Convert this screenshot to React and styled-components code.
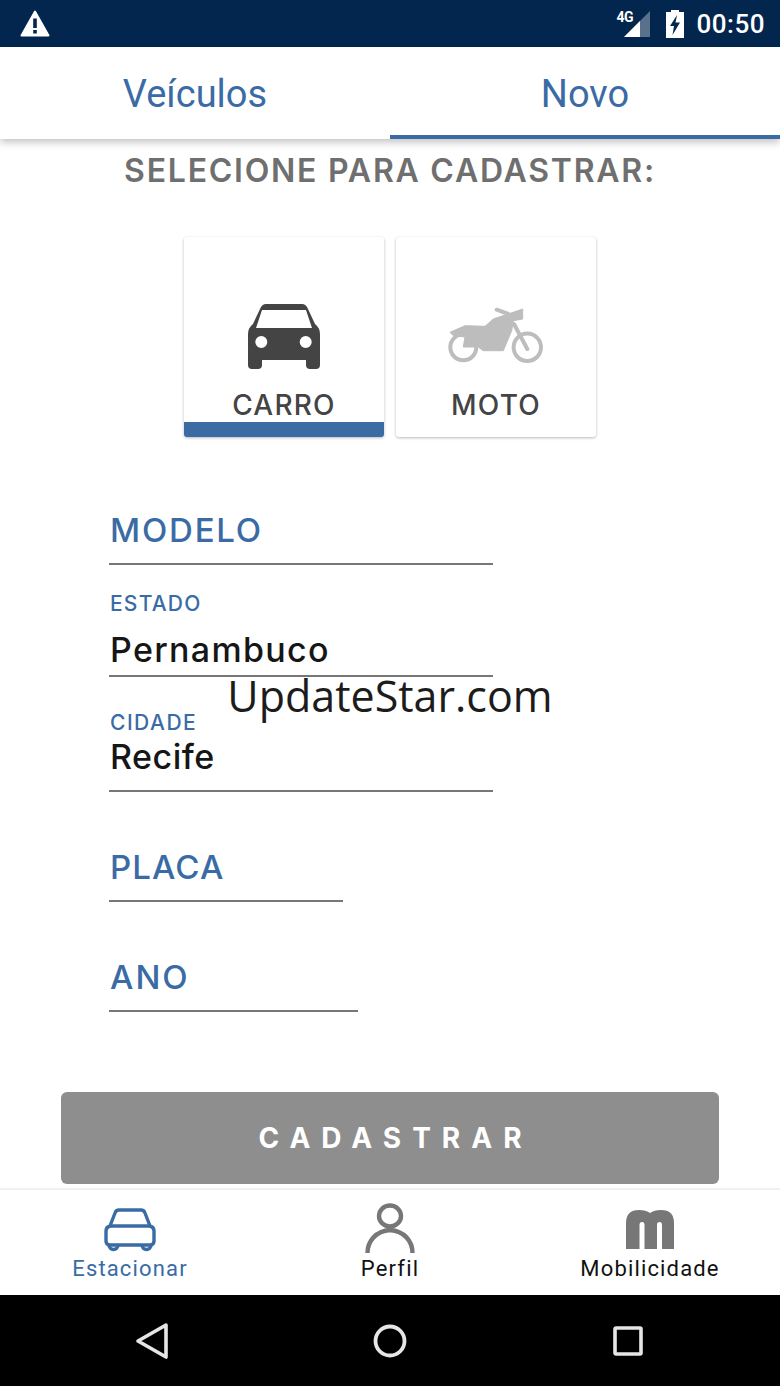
import React from 'react';
import styled, { createGlobalStyle } from 'styled-components';

const BLUE = '#3a6ba5';
const HEAD = '"Inter", "Liberation Sans", sans-serif';
const UI = 'Roboto, "Liberation Sans", sans-serif';

const Global = createGlobalStyle`
  html, body { margin: 0; padding: 0; background: #fff; }
  * { box-sizing: border-box; }
`;

const Screen = styled.div`
  position: relative;
  width: 780px;
  height: 1386px;
  display: flex;
  flex-direction: column;
  overflow: hidden;
  background: #fff;
  font-family: ${HEAD};
`;

const StatusBar = styled.div`
  height: 47px;
  flex: none;
  display: flex;
  align-items: center;
  padding: 0 15px 0 20px;
  background: #02264d;
  color: #fff;
`;

const StatusRight = styled.div`
  margin-left: auto;
  display: flex;
  align-items: center;
`;

const SignalWrap = styled.div`
  position: relative;
  width: 34px;
  height: 26px;
  margin-right: 15px;
`;

const NetLabel = styled.span`
  position: absolute;
  left: 1px;
  top: -1px;
  font: 700 14px/14px ${UI};
  letter-spacing: -0.5px;
  color: #fff;
`;

const Clock = styled.span`
  margin-left: 12px;
  font: 500 26px/30px ${UI};
  letter-spacing: 0.5px;
`;

const Tabs = styled.div`
  position: relative;
  z-index: 1;
  height: 92px;
  flex: none;
  display: flex;
  background: #fff;
  box-shadow: 0 3px 8px rgba(0, 0, 0, 0.25);
`;

const Tab = styled.div`
  flex: 1;
  display: flex;
  align-items: center;
  justify-content: center;
  padding-top: 6px;
  font: 400 38px/40px ${UI};
  color: ${BLUE};
  border-bottom: 4px solid ${p => (p.$active ? BLUE : 'transparent')};
`;

const Content = styled.div`
  flex: 1;
  display: flex;
  flex-direction: column;
`;

const Title = styled.h1`
  margin: 13px 0 0;
  text-align: center;
  font: 600 32px/38px ${HEAD};
  letter-spacing: 1.75px;
  color: #6f6f6f;
`;

const Cards = styled.div`
  margin-top: 47px;
  display: flex;
  justify-content: center;
  gap: 12px;
`;

const Card = styled.div`
  width: 200px;
  height: 200px;
  display: flex;
  flex-direction: column;
  align-items: center;
  background: #fff;
  border-radius: 3px;
  overflow: hidden;
  box-shadow: 0 1px 3px rgba(0, 0, 0, 0.28);
  border-bottom: 15px solid ${p => (p.$selected ? BLUE : '#fff')};
`;

const IconSlot = styled.div`
  height: 151px;
  flex: none;
  padding-top: 67px;
  display: flex;
  justify-content: center;
`;

const CardLabel = styled.span`
  font: 500 28px/34px ${HEAD};
  letter-spacing: 1.2px;
  color: #444;
`;

const Form = styled.div`
  margin-top: 73px;
  padding-left: 109px;
  display: flex;
  flex-direction: column;
`;

const Field = styled.div`
  width: ${p => p.$width}px;
  height: ${p => p.$height}px;
  display: flex;
  flex-direction: column;
  justify-content: flex-end;
  border-bottom: 2px solid #777;
`;

const Placeholder = styled.div`
  padding: 0 0 14px 1px;
  font: 500 33px/38px ${HEAD};
  letter-spacing: ${p => p.$spacing}px;
  color: ${BLUE};
`;

const SmallLabel = styled.div`
  padding-left: 1px;
  font: 500 21px/26px ${HEAD};
  letter-spacing: ${p => p.$spacing}px;
  color: ${BLUE};
`;

const Value = styled.div`
  margin-top: ${p => p.$top}px;
  padding: 0 0 ${p => p.$bottom}px 1px;
  font: 500 34px/38px ${HEAD};
  letter-spacing: ${p => p.$spacing}px;
  color: #161616;
`;

const SubmitButton = styled.button`
  margin: 80px 61px 0;
  height: 92px;
  flex: none;
  padding: 0 0 0 11px;
  border: 0;
  border-radius: 6px;
  background: #8e8e8e;
  color: #fff;
  font: 700 28px/32px ${HEAD};
  letter-spacing: 11px;
`;

const BottomNav = styled.div`
  height: 107px;
  flex: none;
  display: grid;
  grid-template-columns: repeat(3, 1fr);
  border-top: 2px solid #f0f0f0;
  background: #fff;
`;

const NavItem = styled.div`
  display: flex;
  flex-direction: column;
  align-items: center;
  justify-content: flex-end;
  padding-bottom: 13px;
  gap: 2px;
  color: ${p => (p.$active ? BLUE : '#111')};
`;

const NavIcon = styled.div`
  height: 52px;
  padding-top: ${p => p.$drop || 0}px;
  display: flex;
  align-items: center;
  justify-content: center;
`;

const NavLabel = styled.span`
  font: 400 22px/26px ${UI};
  letter-spacing: 1.15px;
`;

const SystemBar = styled.div`
  height: 91px;
  flex: none;
  display: grid;
  grid-template-columns: 304px 172px 304px;
  align-items: center;
  justify-items: center;
  background: #000;
`;

const Watermark = styled.div`
  position: absolute;
  left: 0;
  right: 0;
  top: 668px;
  text-align: center;
  font: 400 43px/56px "Open Sans", "Noto Sans", sans-serif;
  color: #1c1c1c;
`;

const WarningIcon = () => (
  <svg width="30" height="27" viewBox="0 0 30 27">
    <path fill="#fff" stroke="#fff" strokeWidth="2" strokeLinejoin="round" d="M15 1.5 L28.5 25.5 H1.5 Z" />
    <path fill="#02264d" d="M13.2 8.5 H16.8 V18 H13.2 Z M13.2 20 H16.8 V23.5 H13.2 Z" />
  </svg>
);

const SignalIcon = () => (
  <svg width="34" height="26" viewBox="0 0 34 26" style={{ display: 'block' }}>
    <path d="M8 26 L34 0 V26 Z" fill="#fff" fillOpacity="0.35" />
    <path d="M8 26 L24 10 V26 Z" fill="#fff" />
  </svg>
);

const BatteryIcon = () => (
  <svg width="20" height="28" viewBox="0 0 20 28">
    <path fillRule="evenodd" fill="#fff"
      d="M6 0 H14 V2 H19 V28 H1 V2 H6 Z M12 5 L5 16 H9 L7.5 25 L15 12.5 H10.5 Z" />
  </svg>
);

const CarSolid = () => (
  <svg width="72" height="65" viewBox="0 0 72 65">
    <path fillRule="evenodd" fill="#444"
      d="M18 0 H54 Q58 0 60 5 L67 20 Q72 24 72 30 V61 Q72 65 68 65 H62 Q58 65 58 61 V56 H14 V61 Q14 65 10 65 H4 Q0 65 0 61 V30 Q0 24 5 20 L12 5 Q14 0 18 0 Z
         M14 6 L8 24 H64 L58 6 Z
         M13.3 32 A6 6 0 1 0 13.3 44 A6 6 0 1 0 13.3 32 Z
         M57.7 32 A6 6 0 1 0 57.7 44 A6 6 0 1 0 57.7 32 Z" />
  </svg>
);

const Moto = () => (
  <svg width="100" height="62" viewBox="0 0 100 62">
    <g fill="none" stroke="#bdbdbd" strokeWidth="4">
      <circle cx="17.3" cy="43.3" r="13" />
      <circle cx="81.3" cy="43.3" r="13.7" />
      <path d="M50.7 5.7 L62.3 10 M68 20 L81.3 45" strokeLinecap="round" />
    </g>
    <path fill="#bdbdbd" stroke="#bdbdbd" strokeLinejoin="round"
      d="M4 28.3 L19 21.7 L39 22.3 L47.3 15 L62.3 10 L76.7 5 L76.7 15 L67.3 16.7 L65.7 26.7 L57.3 46.7 L37.3 46.7 L32.3 43 L17.3 43 L19 33 L7.3 31.7 Z" />
  </svg>
);

const CarOutline = () => (
  <svg width="52" height="44" viewBox="0 0 52 44" fill="none" stroke={BLUE} strokeWidth="3.4" strokeLinejoin="round">
    <path d="M15 2 H37 Q40 2 41 5 L46 18 Q50 19 50 23 V33 Q50 37 46 37 H6 Q2 37 2 33 V23 Q2 19 6 18 L11 5 Q12 2 15 2 Z" />
    <path d="M6 18 H46" />
    <path d="M5 37 A4.5 4.5 0 0 0 14 37 M38 37 A4.5 4.5 0 0 0 47 37" />
  </svg>
);

const Person = () => (
  <svg width="52" height="50" viewBox="0 0 52 50" fill="none" stroke="#777" strokeWidth="4.4">
    <ellipse cx="26" cy="13" rx="11" ry="10.5" />
    <path d="M3.5 50 C3.5 38 12 28 26 27 C40 28 48.5 38 48.5 50" />
  </svg>
);

const MobiLogo = () => (
  <svg width="48" height="39" viewBox="0 0 48 39">
    <path fill="#777" d="M0 39 V13 Q0 0 13 0 Q20 0 24 3 Q28 0 35 0 Q48 0 48 13 V39 H36 V15 Q36 12 33.5 12 Q31 12 31 15 V39 H18.5 V15 Q18.5 12 16 12 Q13.5 12 13.5 15 V39 Z" />
  </svg>
);

const BackIcon = () => (
  <svg width="34" height="38" viewBox="0 0 34 38" fill="none" stroke="#e6e6e6" strokeWidth="3.6" strokeLinejoin="round">
    <path d="M31 3 L3 19 L31 35 Z" />
  </svg>
);

const HomeIcon = () => (
  <svg width="34" height="34" viewBox="0 0 34 34" fill="none" stroke="#e6e6e6" strokeWidth="3.8">
    <circle cx="17" cy="17" r="14.5" />
  </svg>
);

const RecentIcon = () => (
  <svg width="30" height="30" viewBox="0 0 30 30" fill="none" stroke="#e6e6e6" strokeWidth="3.6" strokeLinejoin="round">
    <rect x="2" y="2" width="26" height="26" rx="1" />
  </svg>
);

export default function App() {
  return (
    <Screen>
      <Global />
      <StatusBar>
        <WarningIcon />
        <StatusRight>
          <SignalWrap>
            <SignalIcon />
            <NetLabel>4G</NetLabel>
          </SignalWrap>
          <BatteryIcon />
          <Clock>00:50</Clock>
        </StatusRight>
      </StatusBar>

      <Tabs>
        <Tab>Veículos</Tab>
        <Tab $active>Novo</Tab>
      </Tabs>

      <Content>
        <Title>SELECIONE PARA CADASTRAR:</Title>

        <Cards>
          <Card $selected>
            <IconSlot><CarSolid /></IconSlot>
            <CardLabel>CARRO</CardLabel>
          </Card>
          <Card>
            <IconSlot><Moto /></IconSlot>
            <CardLabel>MOTO</CardLabel>
          </Card>
        </Cards>

        <Form>
          <Field $width={384} $height={55}>
            <Placeholder $spacing={1.8}>MODELO</Placeholder>
          </Field>
          <Field $width={384} $height={112}>
            <SmallLabel $spacing={1.2}>ESTADO</SmallLabel>
            <Value $top={14} $bottom={6} $spacing={1.3}>Pernambuco</Value>
          </Field>
          <Field $width={384} $height={115}>
            <SmallLabel $spacing={1.5}>CIDADE</SmallLabel>
            <Value $top={2} $bottom={14} $spacing={0.5}>Recife</Value>
          </Field>
          <Field $width={234} $height={110}>
            <Placeholder $spacing={1.1}>PLACA</Placeholder>
          </Field>
          <Field $width={249} $height={110}>
            <Placeholder $spacing={2}>ANO</Placeholder>
          </Field>
        </Form>

        <SubmitButton>CADASTRAR</SubmitButton>
      </Content>

      <BottomNav>
        <NavItem $active>
          <NavIcon $drop={4}><CarOutline /></NavIcon>
          <NavLabel>Estacionar</NavLabel>
        </NavItem>
        <NavItem>
          <NavIcon><Person /></NavIcon>
          <NavLabel>Perfil</NavLabel>
        </NavItem>
        <NavItem>
          <NavIcon $drop={2}><MobiLogo /></NavIcon>
          <NavLabel>Mobilicidade</NavLabel>
        </NavItem>
      </BottomNav>

      <SystemBar>
        <BackIcon />
        <HomeIcon />
        <RecentIcon />
      </SystemBar>

      <Watermark>UpdateStar.com</Watermark>
    </Screen>
  );
}
